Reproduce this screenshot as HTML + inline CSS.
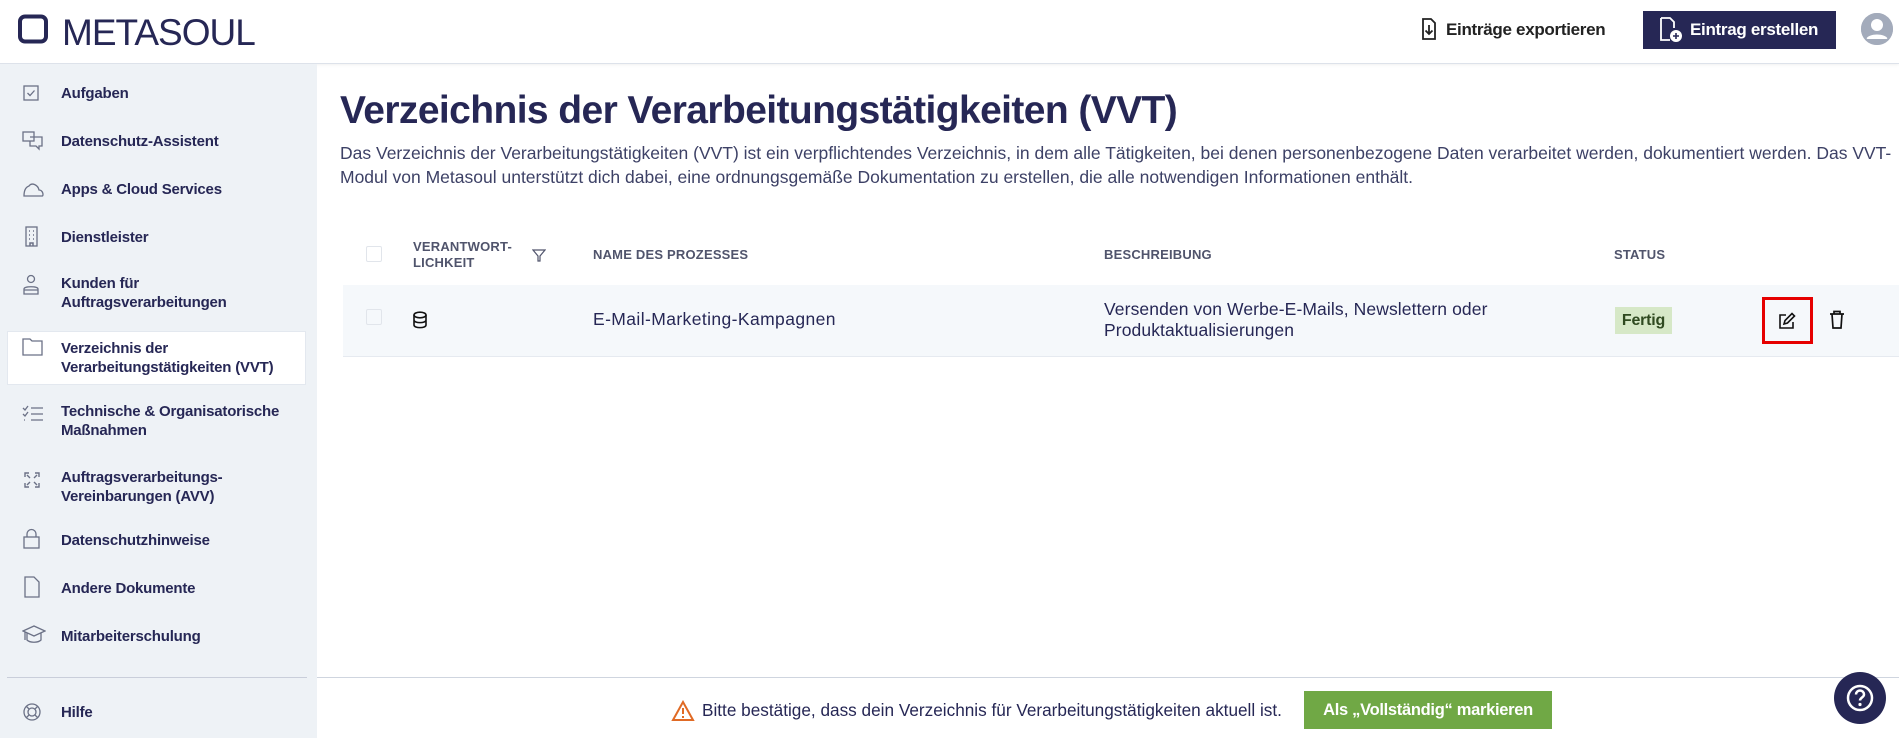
<!DOCTYPE html>
<html><head><meta charset="utf-8"><style>
*{margin:0;padding:0;box-sizing:border-box}
body{width:1899px;height:738px;overflow:hidden;font-family:"Liberation Sans",sans-serif;color:#262755;background:#fff;position:relative}
.a{position:absolute;white-space:nowrap}
.hdr{position:absolute;left:0;top:0;width:1899px;height:64px;background:#fff;border-bottom:1px solid #dde2ea;box-shadow:0 1px 3px rgba(0,0,0,.06)}
.side{position:absolute;left:0;top:64px;width:317px;height:674px;background:#eef2f6}
.it{position:absolute;left:61px;font-size:15px;font-weight:bold;line-height:19px;color:#262755;letter-spacing:-0.2px}
.ic{position:absolute;left:22px}
.th{position:absolute;font-size:13px;font-weight:bold;color:#50546c;letter-spacing:0.2px;line-height:16px}
.cb{position:absolute;width:16px;height:16px;border:1.5px solid #e1e5eb;border-radius:2px;background:#fff}
</style></head><body>
<div class="hdr"></div>
<svg class="a" style="left:17px;top:14px" width="32" height="30" viewBox="0 0 32 30"><rect x="3" y="2.5" width="26" height="25" rx="5" fill="none" stroke="#262755" stroke-width="4"/></svg>
<div class="a" style="left:62px;top:11px;font-size:37px;color:#262755;letter-spacing:-1px;line-height:44px">METASOUL</div>

<svg class="a" style="left:1421px;top:18px" width="16" height="22" viewBox="0 0 16 22"><path d="M2 1h8l4 4v16H2z" fill="none" stroke="#222" stroke-width="1.8"/><path d="M8 7v9M4.5 12.5L8 16l3.5-3.5" fill="none" stroke="#222" stroke-width="1.8"/></svg>
<div class="a" style="left:1446px;top:19px;font-size:17px;font-weight:bold;color:#222;line-height:22px;letter-spacing:-0.3px">Einträge exportieren</div>
<div class="a" style="left:1643px;top:11px;width:193px;height:38px;background:#262755"></div>
<svg class="a" style="left:1659px;top:17px" width="24" height="26" viewBox="0 0 24 26"><path d="M2 1h9l4 4v6M2 1v22h9" fill="none" stroke="#fff" stroke-width="1.8"/><circle cx="17" cy="19" r="6" fill="#fff"/><path d="M17 16v6M14 19h6" stroke="#262755" stroke-width="1.6"/></svg>
<div class="a" style="left:1690px;top:19px;font-size:17px;font-weight:bold;color:#fff;line-height:22px;letter-spacing:-0.3px">Eintrag erstellen</div>
<svg class="a" style="left:1860px;top:12px" width="34" height="34" viewBox="0 0 34 34"><circle cx="17" cy="17" r="16" fill="#a3abbb"/><circle cx="17" cy="13" r="6" fill="#fff"/><path d="M6 27c3-6 19-6 22 0" fill="#fff"/><circle cx="17" cy="17" r="15" fill="none" stroke="#a3abbb" stroke-width="2"/></svg>

<div class="side"></div>
<div class="a" style="left:7px;top:331px;width:299px;height:54px;background:#fff;border:1px solid #e3e8ef"></div>
<svg class="ic" style="top:84px" width="18" height="18" viewBox="0 0 18 18"><rect x="2" y="2" width="14" height="14" fill="none" stroke="#6b7186" stroke-width="1.3"/><path d="M5.5 9l2.5 2.5 4.5-5" fill="none" stroke="#6b7186" stroke-width="1.3"/></svg>
<div class="it" style="top:84px">Aufgaben</div>
<svg class="ic" style="top:131px" width="22" height="20" viewBox="0 0 22 20"><rect x="1" y="1" width="11" height="9" fill="none" stroke="#6b7186" stroke-width="1.3"/><path d="M8 6h12v9h-3v3l-3-3h-6v-5" fill="none" stroke="#6b7186" stroke-width="1.3"/></svg>
<div class="it" style="top:132px">Datenschutz-Assistent</div>
<svg class="ic" style="top:180px" width="22" height="18" viewBox="0 0 22 18"><path d="M2 16h18c2 0 1-6-3-6-1-5-7-8-10-4-3 1-5 4-5 10z" fill="none" stroke="#6b7186" stroke-width="1.3"/></svg>
<div class="it" style="top:180px">Apps &amp; Cloud Services</div>
<svg class="ic" style="top:226px" width="18" height="22" viewBox="0 0 18 22"><rect x="4" y="1" width="11" height="19" fill="none" stroke="#6b7186" stroke-width="1.3"/><path d="M7 5h1M11 5h1M7 9h1M11 9h1M7 13h1M11 13h1M8 20v-3h3v3" stroke="#6b7186" stroke-width="1.5" fill="none"/></svg>
<div class="it" style="top:228px">Dienstleister</div>
<svg class="ic" style="top:274px" width="18" height="22" viewBox="0 0 18 22"><circle cx="9" cy="5" r="3.5" fill="none" stroke="#6b7186" stroke-width="1.3"/><path d="M2 20v-5c0-3 14-3 14 0v5zM2 16h14" fill="none" stroke="#6b7186" stroke-width="1.3"/></svg>
<div class="it" style="top:274px">Kunden für<br>Auftragsverarbeitungen</div>
<svg class="ic" style="top:337px" width="22" height="20" viewBox="0 0 22 20"><path d="M1 2h7l2 2h10v14H1z" fill="none" stroke="#6b7186" stroke-width="1.3"/></svg>
<div class="it" style="top:339px">Verzeichnis der<br>Verarbeitungstätigkeiten (VVT)</div>
<svg class="ic" style="top:405px" width="22" height="18" viewBox="0 0 22 18"><path d="M9 3h12M9 9h12M9 15h12M1 3l2 2 3-4M1 9l2 2 3-4M2 15h1" fill="none" stroke="#6b7186" stroke-width="1.3"/></svg>
<div class="it" style="top:402px">Technische &amp; Organisatorische<br>Maßnahmen</div>
<svg class="ic" style="top:470px" width="20" height="20" viewBox="0 0 20 20"><path d="M3 7V3h4M13 3h4v4M17 13v4h-4M7 17H3v-4M5 5l3 3M15 5l-3 3M15 15l-3-3M5 15l3-3" fill="none" stroke="#6b7186" stroke-width="1.4"/></svg>
<div class="it" style="top:468px">Auftragsverarbeitungs-<br>Vereinbarungen (AVV)</div>
<svg class="ic" style="top:528px" width="20" height="22" viewBox="0 0 20 22"><rect x="2" y="9" width="15" height="11" fill="none" stroke="#6b7186" stroke-width="1.3"/><path d="M5 9V6a4.5 4.5 0 019 0v3" fill="none" stroke="#6b7186" stroke-width="1.3"/></svg>
<div class="it" style="top:531px">Datenschutzhinweise</div>
<svg class="ic" style="top:576px" width="20" height="22" viewBox="0 0 20 22"><path d="M3 1h9l5 5v15H3z" fill="none" stroke="#6b7186" stroke-width="1.3"/></svg>
<div class="it" style="top:579px">Andere Dokumente</div>
<svg class="ic" style="top:624px" width="24" height="22" viewBox="0 0 24 22"><path d="M1 7l11-5 11 5-11 5zM5 9v7c3 3 11 3 14 0V9M3 8v8" fill="none" stroke="#6b7186" stroke-width="1.3"/></svg>
<div class="it" style="top:627px">Mitarbeiterschulung</div>
<div class="a" style="left:7px;top:677px;width:300px;height:1px;background:#c9ceda"></div>
<svg class="ic" style="top:702px" width="20" height="20" viewBox="0 0 20 20"><circle cx="10" cy="10" r="8" fill="none" stroke="#6b7186" stroke-width="1.3"/><circle cx="10" cy="10" r="4" fill="none" stroke="#6b7186" stroke-width="1.3"/><path d="M4.5 4.5l3 3M15.5 4.5l-3 3M4.5 15.5l3-3M15.5 15.5l-3-3" stroke="#6b7186" stroke-width="1.3"/></svg>
<div class="it" style="top:703px">Hilfe</div>

<div class="a" style="left:340px;top:88px;font-size:39px;font-weight:bold;color:#262755;letter-spacing:-0.6px;line-height:46px">Verzeichnis der Verarbeitungstätigkeiten (VVT)</div>
<div class="a" style="left:340px;top:141px;font-size:17.5px;line-height:24px;color:#3d4166;letter-spacing:0">Das Verzeichnis der Verarbeitungstätigkeiten (VVT) ist ein verpflichtendes Verzeichnis, in dem alle Tätigkeiten, bei denen personenbezogene Daten verarbeitet werden, dokumentiert werden. Das VVT-<br>Modul von Metasoul unterstützt dich dabei, eine ordnungsgemäße Dokumentation zu erstellen, die alle notwendigen Informationen enthält.</div>

<div class="cb" style="left:366px;top:246px"></div>
<div class="th" style="left:413px;top:239px">VERANTWORT-<br>LICHKEIT</div>
<svg class="a" style="left:532px;top:248px" width="14" height="14" viewBox="0 0 14 14"><path d="M1 2h12L8 8v5H6V8z" fill="none" stroke="#50546c" stroke-width="1.2"/></svg>
<div class="th" style="left:593px;top:247px">NAME DES PROZESSES</div>
<div class="th" style="left:1104px;top:247px">BESCHREIBUNG</div>
<div class="th" style="left:1614px;top:247px">STATUS</div>

<div class="a" style="left:343px;top:285px;width:1556px;height:72px;background:#f5f8fb;border-bottom:1px solid #e6eaf0"></div>
<div class="cb" style="left:366px;top:309px;background:#f5f8fb"></div>
<svg class="a" style="left:412px;top:311px" width="16" height="18" viewBox="0 0 16 18"><ellipse cx="8" cy="4" rx="6" ry="2.8" fill="none" stroke="#111" stroke-width="1.6"/><path d="M2 4v10c0 3.5 12 3.5 12 0V4M2 9c0 3.5 12 3.5 12 0" fill="none" stroke="#111" stroke-width="1.6"/></svg>
<div class="a" style="left:593px;top:309px;font-size:17.5px;color:#262755;letter-spacing:0.4px;line-height:21px">E-Mail-Marketing-Kampagnen</div>
<div class="a" style="left:1104px;top:299px;font-size:17.5px;color:#262755;letter-spacing:0.1px;line-height:21px">Versenden von Werbe-E-Mails, Newslettern oder<br>Produktaktualisierungen</div>
<div class="a" style="left:1615px;top:307px;width:57px;height:27px;background:#d6e8c7;color:#2f4a20;font-size:16px;font-weight:bold;line-height:27px;text-align:center;letter-spacing:-0.2px">Fertig</div>
<div class="a" style="left:1762px;top:297px;width:51px;height:47px;border:3px solid #e60000"></div>
<svg class="a" style="left:1778px;top:312px" width="18" height="18" viewBox="0 0 18 18"><path d="M8 3H2v13h13v-6" fill="none" stroke="#111" stroke-width="1.6"/><path d="M6 12l1-3.5 7-7 2.5 2.5-7 7z" fill="none" stroke="#111" stroke-width="1.6"/></svg>
<svg class="a" style="left:1828px;top:310px" width="18" height="20" viewBox="0 0 18 20"><path d="M2 4h14M6 4V1.5h6V4M4 4l1 14h8l1-14" fill="none" stroke="#111" stroke-width="1.7"/></svg>

<div class="a" style="left:317px;top:677px;width:1582px;height:1px;background:#cfd5df"></div>
<svg class="a" style="left:671px;top:700px" width="24" height="22" viewBox="0 0 24 22"><path d="M12 2L2 20h20z" fill="none" stroke="#e06a25" stroke-width="2"/><path d="M12 8v6M12 16v2" stroke="#e06a25" stroke-width="2"/></svg>
<div class="a" style="left:702px;top:700px;font-size:17.2px;color:#262755;letter-spacing:0;line-height:21px">Bitte bestätige, dass dein Verzeichnis für Verarbeitungstätigkeiten aktuell ist.</div>
<div class="a" style="left:1304px;top:691px;width:248px;height:38px;background:#70a845;color:#fff;font-size:16.5px;font-weight:bold;line-height:38px;text-align:center;letter-spacing:-0.3px">Als „Vollständig“ markieren</div>
<svg class="a" style="left:1834px;top:672px" width="52" height="52" viewBox="0 0 52 52"><circle cx="26" cy="26" r="26" fill="#262755"/><circle cx="26" cy="26" r="12" fill="none" stroke="#fff" stroke-width="2.5"/><path d="M22 22.5a4 4 0 118 0c0 3-4 3-4 6" fill="none" stroke="#fff" stroke-width="2.5"/><circle cx="26" cy="32.5" r="1.6" fill="#fff"/></svg>
</body></html>
